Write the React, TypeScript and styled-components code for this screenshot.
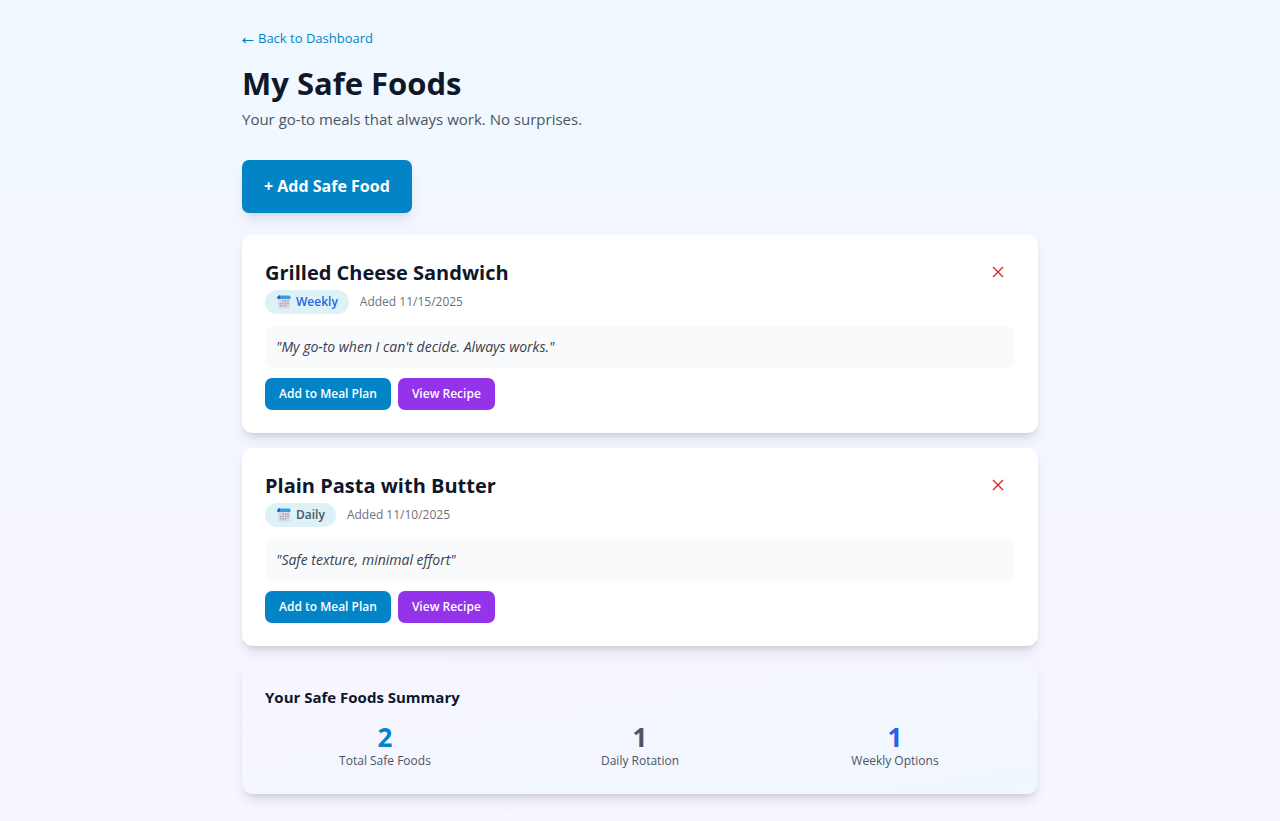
import React from "react";
import styled, { createGlobalStyle } from "styled-components";

const GlobalStyle = createGlobalStyle`
  *, *::before, *::after { box-sizing: border-box; }
  html { min-height: 100%; }
  body {
    margin: 0;
    font-family: "Segoe UI", "Open Sans", "Noto Sans", sans-serif;
    color: #0f172a;
    background: #f8f5ff;
  }
  h1, h2, h3, p, ul, dl, dd { margin: 0; padding: 0; }
  ul { list-style: none; }
  button { font-family: inherit; border: 0; cursor: pointer; }
`;

const Page = styled.div`
  min-height: 100vh;
  padding: 28px 16px;
  background: linear-gradient(to bottom, #f0f8ff, #f8f5ff);
`;

const Container = styled.main`
  max-width: 796px;
  margin: 0 auto;
`;

const BackLink = styled.a`
  display: flex;
  align-items: center;
  gap: 4px;
  width: fit-content;
  margin-bottom: 14px;
  font-size: 13px;
  line-height: 21px;
  color: #0284c7;
  text-decoration: none;
  &:hover { text-decoration: underline; }
`;

const Title = styled.h1`
  margin-bottom: 4px;
  font-size: 31px;
  line-height: 40px;
  font-weight: 700;
`;

const Subtitle = styled.p`
  font-size: 15px;
  line-height: 25px;
  color: #4b5563;
`;

const PrimaryButton = styled.button`
  margin: 28px 0 22px;
  padding: 14px 22px;
  border-radius: 7px;
  font-size: 16px;
  line-height: 25px;
  font-weight: 700;
  color: #fff;
  background: #0284c7;
  box-shadow: 0 9px 14px -3px rgba(15, 23, 42, 0.1), 0 4px 6px -4px rgba(15, 23, 42, 0.1);
`;

const panelShadow = "0 9px 14px -3px rgba(15, 23, 42, 0.1), 0 4px 6px -3px rgba(15, 23, 42, 0.14)";

const FoodList = styled.ul`
  display: grid;
  gap: 15px;
`;

const Card = styled.li`
  padding: 23px;
  border-radius: 11px;
  background: #fff;
  box-shadow: ${panelShadow};
`;

const CardHeader = styled.div`
  display: flex;
  justify-content: space-between;
  align-items: flex-start;
  margin-bottom: 12px;
`;

const FoodName = styled.h2`
  margin-bottom: 2px;
  font-size: 20px;
  line-height: 30px;
  font-weight: 700;
`;

const Meta = styled.div`
  display: flex;
  align-items: center;
  gap: 11px;
  font-size: 12px;
  line-height: 18px;
  color: #6b7280;
`;

const Badge = styled.span<{ $color: string }>`
  display: inline-flex;
  align-items: center;
  gap: 5px;
  padding: 3px 11px 3px 12px;
  border-radius: 12px;
  font-weight: 600;
  color: ${(p) => p.$color};
  background: #dcf2f6;
`;

const RemoveButton = styled.button`
  display: flex;
  padding: 8px 11px;
  background: transparent;
  color: #dc2626;
`;

const Quote = styled.p`
  margin-bottom: 10px;
  padding: 11px;
  border-radius: 7px;
  font-size: 14px;
  line-height: 20px;
  font-style: italic;
  color: #374151;
  background: #f9fafb;
`;

const Actions = styled.div`
  display: flex;
  gap: 7px;
`;

const ActionButton = styled.button<{ $bg: string }>`
  padding: 7px 14px;
  border-radius: 7px;
  font-size: 12px;
  line-height: 18px;
  font-weight: 600;
  color: #fff;
  background: ${(p) => p.$bg};
`;

const Summary = styled.section`
  margin-top: 15px;
  padding: 23px;
  border-radius: 11px;
  background: linear-gradient(to bottom right, #f8f5ff, #f0f7ff);
  box-shadow: ${panelShadow};
`;

const SummaryTitle = styled.h3`
  margin-bottom: 12px;
  font-size: 15px;
  line-height: 27px;
  font-weight: 700;
`;

const Stats = styled.dl`
  display: grid;
  grid-template-columns: repeat(3, 1fr);
  gap: 15px;
  text-align: center;
`;

const Stat = styled.div`
  display: flex;
  flex-direction: column-reverse;
`;

const StatLabel = styled.dt`
  font-size: 12px;
  line-height: 20px;
  color: #4b5563;
`;

const StatValue = styled.dd<{ $color: string }>`
  font-size: 26px;
  line-height: 28px;
  font-weight: 700;
  color: ${(p) => p.$color};
`;

const ArrowIcon = () => (
  <svg width="12" height="12" viewBox="0 0 12 12" fill="none" stroke="currentColor" strokeWidth="1.2" aria-hidden="true">
    <path d="M11.5 7.5H1M3.6 5.2L1 7.5L3.6 9.8" />
  </svg>
);

const CrossIcon = () => (
  <svg width="12" height="12" viewBox="0 0 12 12" fill="none" stroke="currentColor" strokeWidth="1.4" aria-hidden="true">
    <path d="M1 1L11 11M11 1L1 11" />
  </svg>
);

const CalendarIcon = () => (
  <svg width="14" height="14" viewBox="0 0 14 14" aria-hidden="true">
    <rect x="1" y="1" width="12" height="12.5" rx="1.6" fill="#dcd9e6" />
    <path d="M.5 4V2.2Q.5.6 2.1.6H11.9Q13.5.6 13.5 2.2V4Z" fill="#3b9bdc" />
    <path d="M.5 4V2.2Q.5.6 2.1.6H3.4L2.5 4Z" fill="#2463cf" />
    <g fill="#9fa3b8">
      <path d="M5.4 5.3h1.5v1.5H5.4zM7.9 5.3h1.5v1.5H7.9zM10.3 5.3h1.5v1.5h-1.5zM2.8 7.7h1.5v1.5H2.8zM5.4 7.7h1.5v1.5H5.4zM7.9 7.7h1.5v1.5H7.9zM10.3 7.7h1.5v1.5h-1.5zM2.8 10.1h1.5v1.5H2.8zM5.4 10.1h1.5v1.5H5.4zM7.9 10.1h1.5v1.5H7.9z" />
    </g>
  </svg>
);

const foods = [
  {
    name: "Grilled Cheese Sandwich",
    frequency: "Weekly",
    color: "#2563eb",
    added: "11/15/2025",
    note: "My go-to when I can't decide. Always works.",
  },
  {
    name: "Plain Pasta with Butter",
    frequency: "Daily",
    color: "#4b5563",
    added: "11/10/2025",
    note: "Safe texture, minimal effort",
  },
];

const stats = [
  { label: "Total Safe Foods", value: 2, color: "#0284c7" },
  { label: "Daily Rotation", value: 1, color: "#4b5563" },
  { label: "Weekly Options", value: 1, color: "#2563eb" },
];

export default function App() {
  return (
    <Page>
      <GlobalStyle />
      <Container>
        <BackLink href="#dashboard">
          <ArrowIcon />
          Back to Dashboard
        </BackLink>
        <Title>My Safe Foods</Title>
        <Subtitle>Your go-to meals that always work. No surprises.</Subtitle>
        <PrimaryButton type="button">+ Add Safe Food</PrimaryButton>
        <FoodList>
          {foods.map((food) => (
            <Card key={food.name}>
              <CardHeader>
                <div>
                  <FoodName>{food.name}</FoodName>
                  <Meta>
                    <Badge $color={food.color}>
                      <CalendarIcon />
                      {food.frequency}
                    </Badge>
                    <span>Added {food.added}</span>
                  </Meta>
                </div>
                <RemoveButton type="button" aria-label={`Remove ${food.name}`}>
                  <CrossIcon />
                </RemoveButton>
              </CardHeader>
              <Quote>"{food.note}"</Quote>
              <Actions>
                <ActionButton type="button" $bg="#0284c7">Add to Meal Plan</ActionButton>
                <ActionButton type="button" $bg="#9333ea">View Recipe</ActionButton>
              </Actions>
            </Card>
          ))}
        </FoodList>
        <Summary>
          <SummaryTitle>Your Safe Foods Summary</SummaryTitle>
          <Stats>
            {stats.map((stat) => (
              <Stat key={stat.label}>
                <StatLabel>{stat.label}</StatLabel>
                <StatValue $color={stat.color}>{stat.value}</StatValue>
              </Stat>
            ))}
          </Stats>
        </Summary>
      </Container>
    </Page>
  );
}
